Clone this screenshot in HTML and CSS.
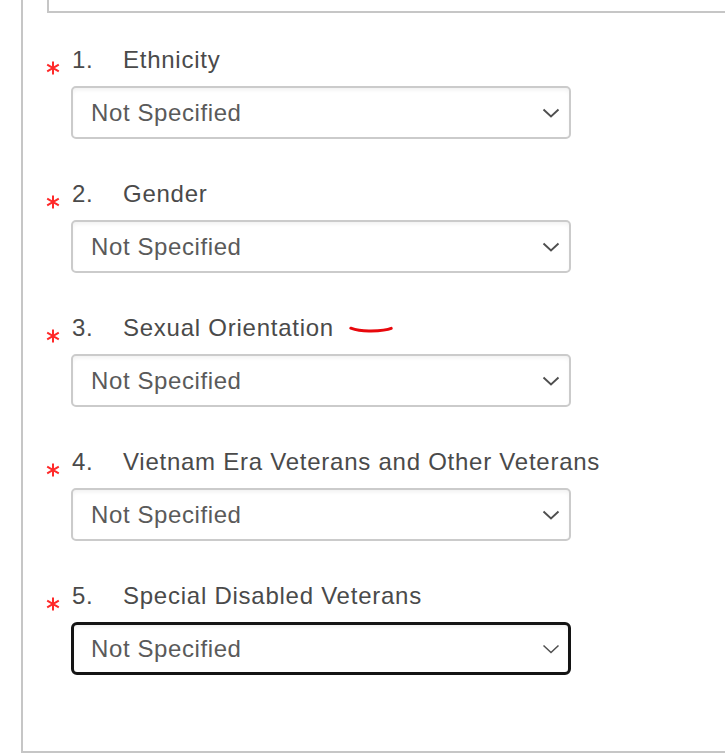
FILE: index.html
```html
<!DOCTYPE html>
<html>
<head>
<meta charset="utf-8">
<link rel="stylesheet" href="styles.css">
</head>
<body>
<div class="frame">
  <div class="top-box"></div>
  <div class="fields">
    <div class="field">
      <svg class="req" viewBox="0 0 14 14" width="14" height="14"><path d="M7 0.5V13.5M1.2 3.6L12.8 10.4M1.2 10.4L12.8 3.6"/></svg>
      <div class="body">
        <div class="label"><span class="num">1.</span><span>Ethnicity</span></div>
        <div class="select"><span>Not Specified</span><svg class="chev" viewBox="0 0 18 10" width="18" height="10"><path d="M1.5 1.5L9 8.5L16.5 1.5"/></svg></div>
      </div>
    </div>
    <div class="field">
      <svg class="req" viewBox="0 0 14 14" width="14" height="14"><path d="M7 0.5V13.5M1.2 3.6L12.8 10.4M1.2 10.4L12.8 3.6"/></svg>
      <div class="body">
        <div class="label"><span class="num">2.</span><span>Gender</span></div>
        <div class="select"><span>Not Specified</span><svg class="chev" viewBox="0 0 18 10" width="18" height="10"><path d="M1.5 1.5L9 8.5L16.5 1.5"/></svg></div>
      </div>
    </div>
    <div class="field">
      <svg class="req" viewBox="0 0 14 14" width="14" height="14"><path d="M7 0.5V13.5M1.2 3.6L12.8 10.4M1.2 10.4L12.8 3.6"/></svg>
      <div class="body">
        <div class="label"><span class="num">3.</span><span>Sexual Orientation</span><svg class="squiggle" viewBox="0 0 44 8" width="44" height="8"><path d="M1.8 3.2C8 5.5 14 6.2 22 6C30 5.8 37 5.6 42.2 3.4"/></svg></div>
        <div class="select"><span>Not Specified</span><svg class="chev" viewBox="0 0 18 10" width="18" height="10"><path d="M1.5 1.5L9 8.5L16.5 1.5"/></svg></div>
      </div>
    </div>
    <div class="field">
      <svg class="req" viewBox="0 0 14 14" width="14" height="14"><path d="M7 0.5V13.5M1.2 3.6L12.8 10.4M1.2 10.4L12.8 3.6"/></svg>
      <div class="body">
        <div class="label"><span class="num">4.</span><span>Vietnam Era Veterans and Other Veterans</span></div>
        <div class="select"><span>Not Specified</span><svg class="chev" viewBox="0 0 18 10" width="18" height="10"><path d="M1.5 1.5L9 8.5L16.5 1.5"/></svg></div>
      </div>
    </div>
    <div class="field">
      <svg class="req" viewBox="0 0 14 14" width="14" height="14"><path d="M7 0.5V13.5M1.2 3.6L12.8 10.4M1.2 10.4L12.8 3.6"/></svg>
      <div class="body">
        <div class="label"><span class="num">5.</span><span>Special Disabled Veterans</span></div>
        <div class="select focused"><span>Not Specified</span><svg class="chev thin" viewBox="0 0 18 10" width="18" height="10"><path d="M1.5 1.5L9 8.5L16.5 1.5"/></svg></div>
      </div>
    </div>
  </div>
</div>
</body>
</html>
```

FILE: styles.css
```css
html, body {
  margin: 0;
  padding: 0;
  background: #ffffff;
  overflow: hidden;
}

body {
  font-family: "Liberation Sans", Arial, sans-serif;
  width: 725px;
  height: 754px;
}

.frame {
  margin-left: 21px;
  border-left: 2px solid #c6c6c6;
  border-bottom: 2px solid #c6c6c6;
  padding-bottom: 76px;
}

.top-box {
  margin-left: 24px;
  height: 11px;
  border-left: 2px solid #c6c6c6;
  border-bottom: 2px solid #c6c6c6;
}

.fields {
  margin-top: 31px;
  padding-left: 23px;
  display: flex;
  flex-direction: column;
  gap: 39px;
}

.field {
  display: flex;
  align-items: flex-start;
}

.req {
  width: 14px;
  height: 14px;
  margin-top: 17px;
  margin-right: 11px;
  flex: none;
}

.req path {
  stroke: #ff2a2a;
  stroke-width: 2;
  fill: none;
}

.body {
  display: flex;
  flex-direction: column;
  gap: 12px;
}

.label {
  height: 30px;
  line-height: 32px;
  font-size: 24px;
  letter-spacing: 0.75px;
  color: #4a4a4a;
  white-space: nowrap;
  display: flex;
  align-items: baseline;
}

.num {
  display: inline-block;
  width: 51px;
  margin-left: 1px;
}

.squiggle {
  margin-left: 15px;
  align-self: center;
  margin-top: 4px;
}

.squiggle path {
  stroke: #e8080c;
  stroke-width: 3;
  fill: none;
  stroke-linecap: round;
}

.select {
  box-sizing: border-box;
  width: 500px;
  height: 53px;
  border: 2px solid #cbcbcb;
  border-radius: 5px;
  box-shadow: inset 0 3px 4px -1px rgba(0, 0, 0, 0.06);
  display: flex;
  align-items: center;
  justify-content: space-between;
  padding: 0 9px 0 18px;
  font-size: 24px;
  letter-spacing: 0.6px;
  color: #5a5a5a;
  background: #ffffff;
}

.select.focused {
  border: 3px solid #141414;
  border-radius: 6px;
  padding: 0 8px 0 17px;
}

.chev path {
  stroke: #4f4f4f;
  stroke-width: 1.9;
  fill: none;
}

.chev.thin path {
  stroke-width: 1.5;
}
```
